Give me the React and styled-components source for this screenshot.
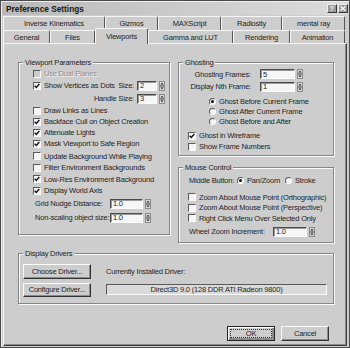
import styled, { createGlobalStyle, css } from 'styled-components';

const GlobalStyle = createGlobalStyle`
  html, body { margin: 0; padding: 0; background: #cdcdcd; }
  body { font-family: "Liberation Sans", Arial, sans-serif; color: #1f1f1f; }
`;

const Window = styled.div`
  width: 350px;
  height: 348px;
  box-sizing: border-box;
  background: #cdcdcd;
  border: 1px solid #4a4a4a;
  box-shadow: inset 1px 1px #efefef;
  display: flex;
  flex-direction: column;
  font-size: 7.5px;
  letter-spacing: -0.2px;
`;

const TitleBar = styled.div`
  height: 13px;
  margin: 1px 1px 0 1px;
  padding: 0 0 0 4px;
  display: flex;
  align-items: center;
  gap: 1px;
  background: linear-gradient(to right, #b9b9b9, #dcdcdc);
`;

const Title = styled.div`
  flex: 1;
  font-weight: bold;
  font-size: 8.3px;
  letter-spacing: 0;
  color: #161616;
`;

const CaptionButton = styled.div`
  width: 10px;
  height: 9px;
  box-sizing: border-box;
  display: flex;
  align-items: center;
  justify-content: center;
  background: #9a9a9a;
  border: 1px solid;
  border-color: #f0f0f0 #3a3a3a #3a3a3a #f0f0f0;
  color: #fafafa;
  font-size: 7px;
  font-weight: bold;
  letter-spacing: 0;
  line-height: 1;
`;

const TabRows = styled.div`
  display: flex;
  flex-direction: column;
  margin: 1px 2px 0 2px;
`;

const TabRow = styled.div`
  display: flex;
  height: ${p => p.$h}px;
`;

const Tab = styled.div`
  width: ${p => p.$w}px;
  box-sizing: border-box;
  display: flex;
  align-items: center;
  justify-content: center;
  border-top: 1px solid #f6f6f6;
  border-left: 1px solid #f6f6f6;
  border-right: 1px solid #555;
  border-radius: 2px 2px 0 0;
  background: #cdcdcd;
  white-space: nowrap;
  ${p => p.$active && css`
    position: relative;
    z-index: 2;
    margin-top: -2px;
    margin-bottom: -1px;
  `}
`;

const Panel = styled.div`
  flex: 1;
  margin: 0 2px 1px 2px;
  padding: 14px 12px 0 14px;
  border: 1px solid;
  border-color: #f6f6f6 #3e3e3e #3e3e3e #f6f6f6;
  box-shadow: inset -1px -1px #8a8a8a;
  display: flex;
  flex-direction: column;
`;

const Columns = styled.div`
  display: grid;
  grid-template-columns: 152px 1fr;
  column-gap: 8px;
  align-items: start;
`;

const Stack = styled.div`
  display: flex;
  flex-direction: column;
  gap: ${p => p.$gap || 0}px;
`;

const Group = styled.fieldset`
  margin: ${p => p.$mt || 0}px 0 0 0;
  padding: 0;
  min-width: 0;
  border: 1px solid #858585;
  box-shadow: 1px 1px 0 #fbfbfb, inset 1px 1px 0 #fbfbfb;
`;

const Legend = styled.legend`
  margin-left: 4px;
  padding: 0 2px;
  line-height: 9px;
  background: #cdcdcd;
`;

const GroupBody = styled.div`
  padding: ${p => p.$pad};
`;

const Row = styled.div`
  display: flex;
  align-items: center;
  height: ${p => p.$h || 11}px;
  padding-left: ${p => p.$indent || 0}px;
  margin-top: ${p => p.$mt || 0}px;
  white-space: nowrap;
`;

const CheckLabel = styled.label`
  display: flex;
  align-items: center;
  gap: 3px;
  color: ${p => (p.$disabled ? '#8f8f8f' : 'inherit')};
  text-shadow: ${p => (p.$disabled ? '1px 1px 0 #f4f4f4' : 'none')};
`;

const Box = styled.span`
  width: 8px;
  height: 8px;
  box-sizing: border-box;
  border: 1px solid;
  border-color: #5a5a5a #fbfbfb #fbfbfb #5a5a5a;
  background: ${p => (p.$disabled ? '#cdcdcd' : '#f5f5f5')};
  display: flex;
  align-items: center;
  justify-content: center;
`;

const RadioDot = styled.span`
  width: 7px;
  height: 7px;
  box-sizing: border-box;
  border-radius: 50%;
  border: 1px solid;
  border-color: #5a5a5a #fbfbfb #fbfbfb #5a5a5a;
  background: #f5f5f5;
  display: flex;
  align-items: center;
  justify-content: center;
  &::after {
    content: '';
    width: 3px;
    height: 3px;
    border-radius: 50%;
    background: ${p => (p.$on ? '#111' : 'transparent')};
  }
`;

const RadioLabel = styled.label`
  display: flex;
  align-items: center;
  gap: 3px;
  width: ${p => (p.$w ? `${p.$w}px` : 'auto')};
`;

const FieldLabel = styled.span`
  width: ${p => (p.$w ? `${p.$w}px` : 'auto')};
  text-align: ${p => p.$align || 'left'};
  flex-shrink: 0;
  ${p => p.$push && css`
    margin-left: auto;
    padding-right: 3px;
  `}
`;

const SpinWrap = styled.div`
  display: flex;
  align-items: center;
  gap: 2px;
  margin-left: ${p => p.$ml || 0}px;
`;

const Field = styled.div`
  width: ${p => p.$w}px;
  height: 10px;
  box-sizing: border-box;
  padding-left: 2px;
  display: flex;
  align-items: center;
  background: #f6f6f6;
  border: 1px solid;
  border-color: #4a4a4a #fbfbfb #fbfbfb #4a4a4a;
  box-shadow: inset 1px 1px #9a9a9a;
`;

const DriverGrid = styled.div`
  display: grid;
  grid-template-columns: 68px 1fr;
  column-gap: 15px;
  row-gap: 4px;
  align-items: center;
  padding: 6px 6px 6px 4px;
`;

const DriverField = styled.div`
  height: 11px;
  box-sizing: border-box;
  display: flex;
  align-items: center;
  justify-content: center;
  background: #dadada;
  border: 1px solid;
  border-color: #5a5a5a #fbfbfb #fbfbfb #5a5a5a;
`;

const Button = styled.button`
  font: inherit;
  letter-spacing: inherit;
  color: #1f1f1f;
  width: ${p => p.$w}px;
  height: ${p => p.$h || 15}px;
  padding: 0;
  background: #cdcdcd;
  border: 1px solid;
  border-color: #fbfbfb #333 #333 #fbfbfb;
  box-shadow: inset -1px -1px #8a8a8a;
  ${p => p.$default && css`
    outline: 1px dotted #333;
    outline-offset: -4px;
    border-color: #222;
    box-shadow: inset 1px 1px #fbfbfb, inset -2px -2px #8a8a8a;
  `}
`;

const Footer = styled.div`
  display: flex;
  justify-content: flex-end;
  gap: 6px;
  margin-top: 22px;
  padding-right: 5px;
`;

const CheckMark = () => (
  <svg width="6" height="6" viewBox="0 0 6 6">
    <path d="M0.7 2.7 L2.3 4.4 L5.3 1" fill="none" stroke="#111" strokeWidth="1.4" />
  </svg>
);

const SpinArrows = () => (
  <svg width="6" height="10" viewBox="0 0 6 10">
    <rect x="0.5" y="0.5" width="5" height="4" fill="#d9d9d9" stroke="#8a8a8a" />
    <rect x="0.5" y="5.5" width="5" height="4" fill="#d9d9d9" stroke="#8a8a8a" />
    <path d="M1.5 3.6 L3 1.8 L4.5 3.6Z" fill="#111" />
    <path d="M1.5 6.4 L3 8.2 L4.5 6.4Z" fill="#111" />
  </svg>
);

function Check({ checked, disabled, children }) {
  return (
    <CheckLabel $disabled={disabled}>
      <Box $disabled={disabled}>{checked && <CheckMark />}</Box>
      {children}
    </CheckLabel>
  );
}

function Radio({ on, w, children }) {
  return (
    <RadioLabel $w={w}>
      <RadioDot $on={on} />
      {children}
    </RadioLabel>
  );
}

function Spinner({ w, value, ml }) {
  return (
    <SpinWrap $ml={ml}>
      <Field $w={w}>{value}</Field>
      <SpinArrows />
    </SpinWrap>
  );
}

const backTabs = [
  { label: 'Inverse Kinematics', w: 102 },
  { label: 'Gizmos', w: 53 },
  { label: 'MAXScript', w: 63 },
  { label: 'Radiosity', w: 61 },
  { label: 'mental ray', w: 63 },
];

const frontTabs = [
  { label: 'General', w: 47 },
  { label: 'Files', w: 45 },
  { label: 'Viewports', w: 53, active: true },
  { label: 'Gamma and LUT', w: 85 },
  { label: 'Rendering', w: 57 },
  { label: 'Animation', w: 55 },
];

export default function App() {
  return (
    <>
      <GlobalStyle />
      <Window>
        <TitleBar>
          <Title>Preference Settings</Title>
          <CaptionButton>?</CaptionButton>
          <CaptionButton>
            <svg width="6" height="5" viewBox="0 0 6 5">
              <path d="M0.5 0.3 L5.5 4.7 M5.5 0.3 L0.5 4.7" stroke="#fafafa" strokeWidth="1.3" />
            </svg>
          </CaptionButton>
        </TitleBar>

        <TabRows>
          <TabRow $h={14}>
            {backTabs.map(t => (
              <Tab key={t.label} $w={t.w}>{t.label}</Tab>
            ))}
          </TabRow>
          <TabRow $h={13}>
            {frontTabs.map(t => (
              <Tab key={t.label} $w={t.w} $active={t.active}>{t.label}</Tab>
            ))}
          </TabRow>
        </TabRows>

        <Panel>
          <Columns>
            <Group>
              <Legend>Viewport Parameters</Legend>
              <GroupBody $pad="1px 4px 9px 14px">
                <Row><Check disabled>Use Dual Planes</Check></Row>
                <Row $h={13}>
                  <Check checked>Show Vertices as Dots</Check>
                  <FieldLabel $push>Size:</FieldLabel>
                  <Spinner w={20} value="2" />
                </Row>
                <Row $h={13}>
                  <FieldLabel $push>Handle Size:</FieldLabel>
                  <Spinner w={20} value="3" />
                </Row>
                <Row><Check>Draw Links as Lines</Check></Row>
                <Row><Check checked>Backface Cull on Object Creation</Check></Row>
                <Row><Check checked>Attenuate Lights</Check></Row>
                <Row><Check checked>Mask Viewport to Safe Region</Check></Row>
                <Row $h={11.5} $mt={1.5}><Check>Update Background While Playing</Check></Row>
                <Row $h={11.5}><Check>Filter Environment Backgrounds</Check></Row>
                <Row $h={11.5}><Check checked>Low-Res Environment Background</Check></Row>
                <Row $h={11.5}><Check checked>Display World Axis</Check></Row>
                <Row $h={14} $indent={2}>
                  <FieldLabel $w={75}>Grid Nudge Distance:</FieldLabel>
                  <Spinner w={33} value="1.0" />
                </Row>
                <Row $h={14} $indent={2}>
                  <FieldLabel $w={75}>Non-scaling object size:</FieldLabel>
                  <Spinner w={33} value="1.0" />
                </Row>
              </GroupBody>
            </Group>

            <Stack $gap={7}>
              <Group>
                <Legend>Ghosting</Legend>
                <GroupBody $pad="1px 0 3px 0">
                  <Row $h={12}>
                    <FieldLabel $w={72} $align="right">Ghosting Frames:</FieldLabel>
                    <Spinner w={35} value="5" ml={9} />
                  </Row>
                  <Row $h={13}>
                    <FieldLabel $w={72} $align="right">Display Nth Frame:</FieldLabel>
                    <Spinner w={35} value="1" ml={9} />
                  </Row>
                  <Row $h={10} $indent={30} $mt={3}><Radio on>Ghost Before Current Frame</Radio></Row>
                  <Row $h={10} $indent={30}><Radio>Ghost After Current Frame</Radio></Row>
                  <Row $h={10} $indent={30}><Radio>Ghost Before and After</Radio></Row>
                  <Row $indent={9} $mt={4}><Check checked>Ghost in Wireframe</Check></Row>
                  <Row $indent={9}><Check>Show Frame Numbers</Check></Row>
                </GroupBody>
              </Group>

              <Group>
                <Legend>Mouse Control</Legend>
                <GroupBody $pad="2px 0 3px 0">
                  <Row $h={12} $indent={10}>
                    <FieldLabel $w={48}>Middle Button:</FieldLabel>
                    <Radio on w={48}>Pan/Zoom</Radio>
                    <Radio>Stroke</Radio>
                  </Row>
                  <Row $h={10.5} $indent={9} $mt={6}><Check>Zoom About Mouse Point (Orthographic)</Check></Row>
                  <Row $h={10.5} $indent={9}><Check>Zoom About Mouse Point (Perspective)</Check></Row>
                  <Row $h={10.5} $indent={9}><Check>Right Click Menu Over Selected Only</Check></Row>
                  <Row $h={14} $indent={10} $mt={1}>
                    <FieldLabel $w={84}>Wheel Zoom Increment:</FieldLabel>
                    <Spinner w={34} value="1.0" />
                  </Row>
                </GroupBody>
              </Group>
            </Stack>
          </Columns>

          <Group $mt={6}>
            <Legend>Display Drivers</Legend>
            <DriverGrid>
              <Button $w={68}>Choose Driver...</Button>
              <span>Currently Installed Driver:</span>
              <Button $w={68} $h={14}>Configure Driver...</Button>
              <DriverField>Direct3D 9.0 (128 DDR ATI Radeon 9800)</DriverField>
            </DriverGrid>
          </Group>

          <Footer>
            <Button $w={48} $default>OK</Button>
            <Button $w={48}>Cancel</Button>
          </Footer>
        </Panel>
      </Window>
    </>
  );
}
